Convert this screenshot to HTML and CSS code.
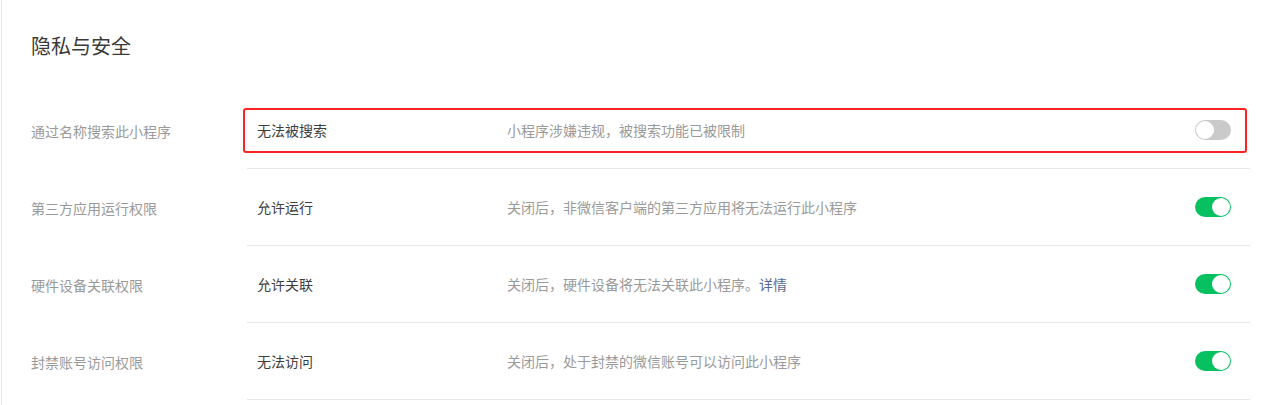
FILE: index.html
```html
<!DOCTYPE html>
<html lang="zh-CN">

<head>
  <meta charset="UTF-8">
  <meta name="viewport" content="width=device-width, initial-scale=1.0">
  <title>隐私与安全</title>
  <link rel="stylesheet" href="styles.css">
</head>

<body>
  <div class="page">
    <h2 class="page_title">隐私与安全</h2>

    <ul class="setting_list">
      <li class="setting_item">
        <div class="setting_label">通过名称搜索此小程序</div>
        <div class="setting_body">
          <span class="setting_value">无法被搜索</span>
          <span class="setting_desc">小程序涉嫌违规，被搜索功能已被限制</span>
          <span class="switch"></span>
          <!-- 标注框 -->
          <div class="mark_box"></div>
        </div>
      </li>
      <li class="setting_item">
        <div class="setting_label">第三方应用运行权限</div>
        <div class="setting_body">
          <span class="setting_value">允许运行</span>
          <span class="setting_desc">关闭后，非微信客户端的第三方应用将无法运行此小程序</span>
          <span class="switch switch_on"></span>
        </div>
      </li>
      <li class="setting_item">
        <div class="setting_label">硬件设备关联权限</div>
        <div class="setting_body">
          <span class="setting_value">允许关联</span>
          <span class="setting_desc">关闭后，硬件设备将无法关联此小程序。<a class="link" href="#">详情</a></span>
          <span class="switch switch_on"></span>
        </div>
      </li>
      <li class="setting_item">
        <div class="setting_label">封禁账号访问权限</div>
        <div class="setting_body">
          <span class="setting_value">无法访问</span>
          <span class="setting_desc">关闭后，处于封禁的微信账号可以访问此小程序</span>
          <span class="switch switch_on"></span>
        </div>
      </li>
    </ul>
  </div>
</body>

</html>
```

FILE: styles.css
```css
* {
  margin: 0;
  padding: 0;
  box-sizing: border-box;
  list-style: none;
}

body {
  background: #fff;
  font-family: "Noto Sans CJK SC", "Noto Sans", sans-serif;
  font-size: 14px;
  color: #353535;
}

.page {
  margin: 0 0 0 1px;
  padding: 32px 25px 0 29px;
  border-left: 1px solid #e7e7eb;
  min-height: 420px;
}

.page_title {
  font-size: 20px;
  font-weight: 400;
  line-height: 28px;
  color: #3a3a3a;
  margin-bottom: 32px;
}

.setting_item {
  display: flex;
  align-items: stretch;
}

.setting_label {
  width: 216px;
  flex-shrink: 0;
  display: flex;
  align-items: center;
  color: #9a9a9a;
}

.setting_body {
  position: relative;
  flex: 1;
  height: 77px;
  display: flex;
  align-items: center;
  padding: 0 19px 0 10px;
  border-bottom: 1px solid #e7e7eb;
}

.setting_value {
  width: 250px;
  flex-shrink: 0;
  color: #3e3e3e;
}

.setting_desc {
  flex: 1;
  color: #9a9a9a;
}

.link {
  color: #576b95;
  text-decoration: none;
}

/* 开关 */
.switch {
  position: relative;
  width: 36px;
  height: 20px;
  border-radius: 10px;
  background: #cacaca;
  flex-shrink: 0;
}

.switch::after {
  content: '';
  position: absolute;
  top: 1px;
  left: 1px;
  width: 18px;
  height: 18px;
  border-radius: 50%;
  background: #fff;
}

.switch_on {
  background: #07c160;
}

.switch_on::after {
  left: auto;
  right: 1px;
}

.mark_box {
  position: absolute;
  top: 16px;
  left: -4px;
  right: 3px;
  height: 45px;
  border: 2px solid #ff2222;
  border-radius: 3px;
}
```
